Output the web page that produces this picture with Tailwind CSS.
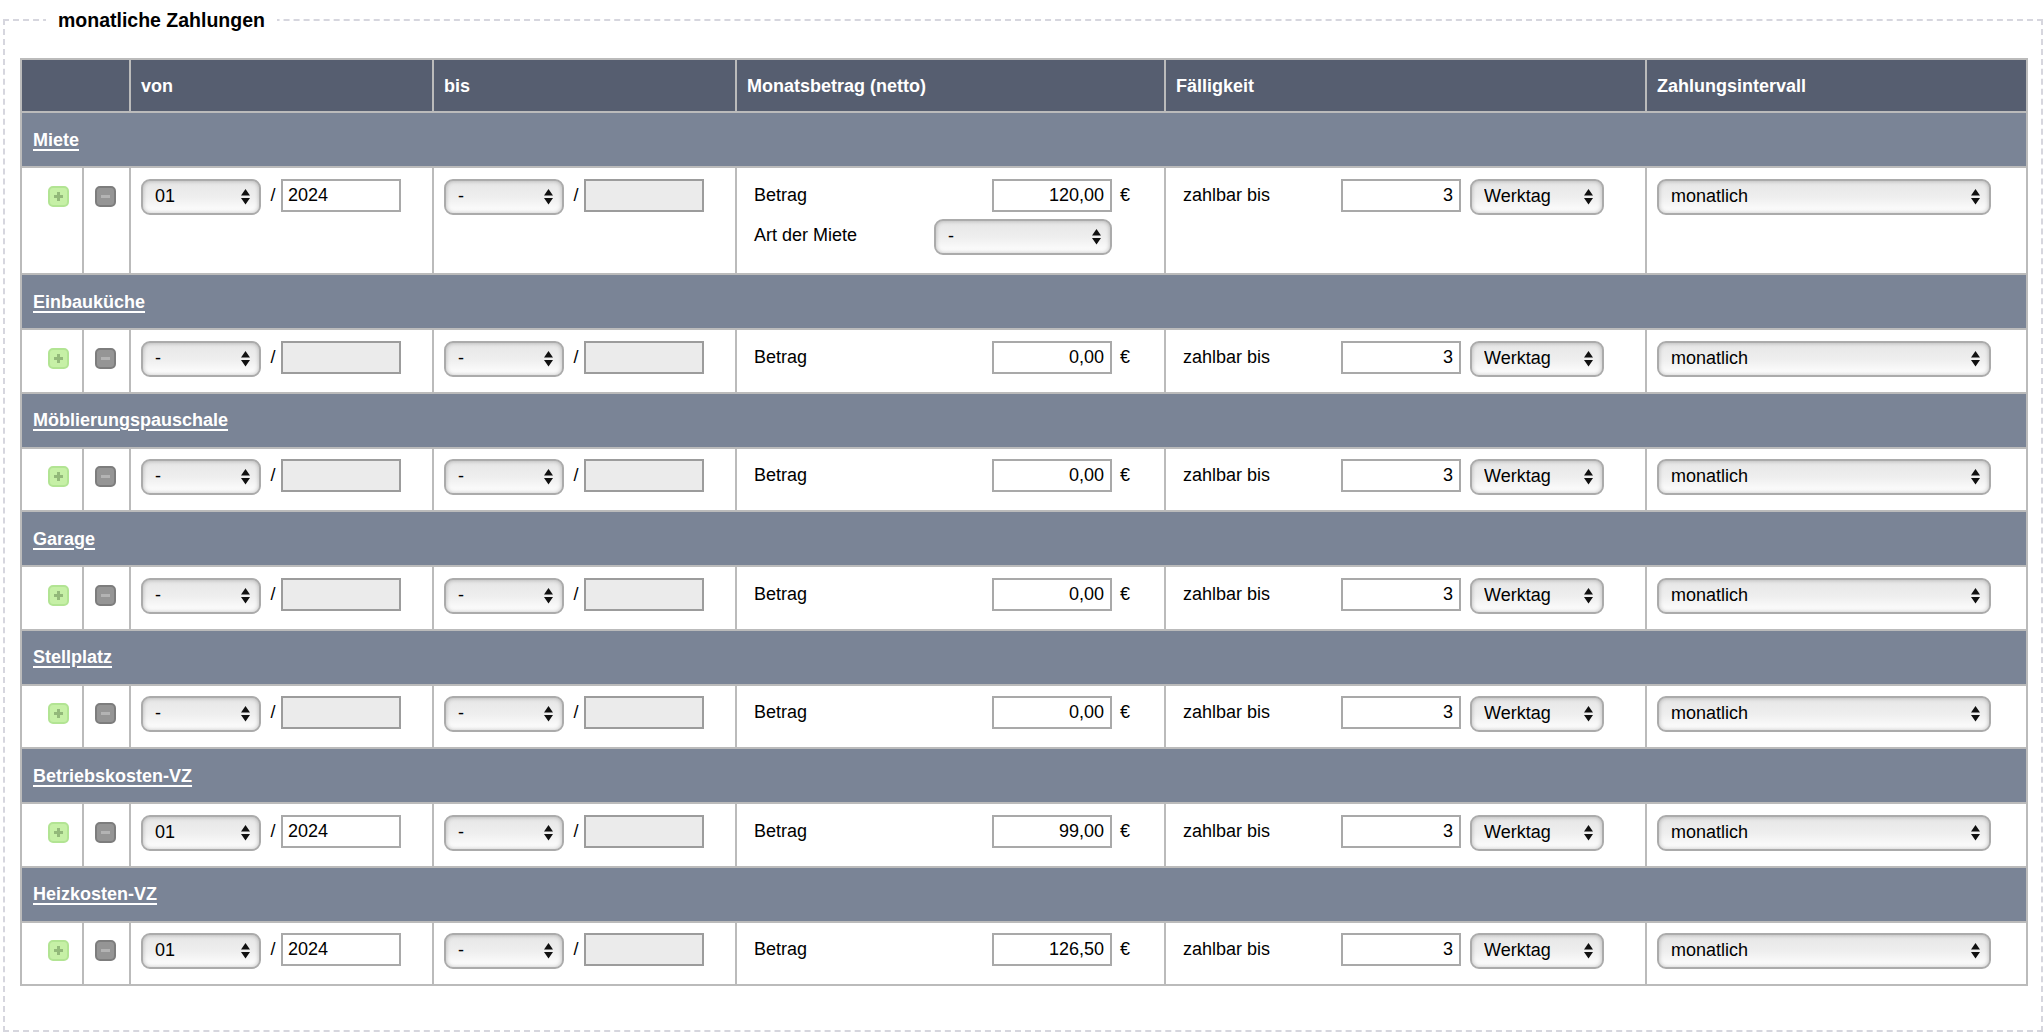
<!DOCTYPE html>
<html lang="de">
<head>
  <meta charset="UTF-8" />
  <title>monatliche Zahlungen</title>
  <script src="https://cdn.jsdelivr.net/npm/@tailwindcss/browser@4"></script>
</head>
<body class="bg-white text-black text-[18px] leading-[22px] font-['Liberation_Sans',Arial,sans-serif] overflow-hidden">
  <fieldset class="mt-[8px] mx-[3px] w-[2040px] h-[1024px] border-2 border-dashed border-[#d6d6de] pt-[26px] pl-[15px]">
    <legend class="ml-[26px] px-[12px] text-[19.5px] leading-[24px] font-bold">monatliche Zahlungen</legend>

    <table class="table-fixed border-collapse w-[2007px] border-2 border-[#bbbbbb]">
      <colgroup>
        <col class="w-[62px]" /><col class="w-[47px]" /><col class="w-[303px]" /><col class="w-[303px]" /><col class="w-[429px]" /><col class="w-[481px]" /><col class="w-[381px]" />
      </colgroup>
      <thead>
        <tr class="h-[53px] bg-[#565e70] text-white font-bold text-left">
          <th colspan="2" class="border-2 border-[#bbbbbb]"></th>
          <th class="border-2 border-[#bbbbbb] pl-[10px]">von</th>
          <th class="border-2 border-[#bbbbbb] pl-[10px]">bis</th>
          <th class="border-2 border-[#bbbbbb] pl-[10px]">Monatsbetrag (netto)</th>
          <th class="border-2 border-[#bbbbbb] pl-[10px]">Fälligkeit</th>
          <th class="border-2 border-[#bbbbbb] pl-[10px]">Zahlungsintervall</th>
        </tr>
      </thead>
      <tbody id="rows"></tbody>
    </table>
  </fieldset>

  <script>
    // one entry per payment type: name, von month/year, amount
    const payments = [
      { name: "Miete", month: "01", year: "2024", amount: "120,00", artDerMiete: true },
      { name: "Einbauküche", month: "-", year: "", amount: "0,00" },
      { name: "Möblierungspauschale", month: "-", year: "", amount: "0,00" },
      { name: "Garage", month: "-", year: "", amount: "0,00" },
      { name: "Stellplatz", month: "-", year: "", amount: "0,00" },
      { name: "Betriebskosten-VZ", month: "01", year: "2024", amount: "99,00" },
      { name: "Heizkosten-VZ", month: "01", year: "2024", amount: "126,50" },
    ];

    const dropdown = (label, width) => `
      <div class="relative h-[36px] shrink-0 ${width}">
        <select class="appearance-none w-full h-full pl-[12px] pb-[2px] rounded-[9px] border-2 border-[#ababab] bg-linear-to-b from-[#e6e6e6] via-[#eeeeee] to-white shadow-[inset_0_0_4px_rgba(0,0,0,0.25)]"><option>${label}</option></select>
        <svg class="absolute right-[11px] top-[10px]" width="9" height="16" viewBox="0 0 9 16"><path d="M4.500 0L9 6.500H0zM0 9h9L4.500 15.500z" fill="#111"/></svg>
      </div>`;

    const yearInput = (year) => year
      ? `<input type="text" value="${year}" class="w-[120px] h-[33px] border-2 border-[#a9a9a9] pl-[5px]" />`
      : `<input type="text" disabled class="w-[120px] h-[33px] border-2 border-[#9c9c9c] bg-[#ebebeb] pl-[5px]" />`;

    const period = (month, year) => `
      <div class="flex items-start">
        ${dropdown(month, "w-[120px]")}
        <span class="w-[20px] pl-[4px] text-center leading-[32px]">/</span>
        ${yearInput(year)}
      </div>`;

    const row = (p) => `
      <tr class="h-[55px] bg-[#7a8496]">
        <td colspan="7" class="border-2 border-[#bbbbbb] pl-[11px]"><a href="#" class="font-bold text-white underline decoration-2 underline-offset-[3px]">${p.name}</a></td>
      </tr>
      <tr class="${p.artDerMiete ? "h-[107px]" : "h-[63.5px]"} align-top">
        <td class="border-2 border-[#bbbbbb] pl-[26px] pt-[17.5px]">
          <svg class="block" width="21" height="21" viewBox="0 0 21 21"><rect x="1" y="1" width="19" height="19" rx="4" fill="#c6f0a6" stroke="#b2e493" stroke-width="2"/><path d="M10.500 6v9M6 10.500h9" stroke="#93b97a" stroke-width="3"/></svg>
        </td>
        <td class="border-2 border-[#bbbbbb] pl-[11px] pt-[17.5px]">
          <svg class="block" width="21" height="21" viewBox="0 0 21 21"><rect x="1" y="1" width="19" height="19" rx="4" fill="#959595" stroke="#7d7d7d" stroke-width="2"/><path d="M6 10.500h9" stroke="#b3b3b3" stroke-width="3"/></svg>
        </td>
        <td class="border-2 border-[#bbbbbb] pl-[10px] pt-[10.5px]">${period(p.month, p.year)}</td>
        <td class="border-2 border-[#bbbbbb] pl-[10px] pt-[10.5px]">${period("-", "")}</td>
        <td class="border-2 border-[#bbbbbb] pl-[17px] pt-[10.5px]">
          <div class="flex items-start">
            <div class="w-[358px] flex justify-between items-start">
              <span class="leading-[32px]">Betrag</span>
              <input type="text" value="${p.amount}" class="w-[120px] h-[33px] border-2 border-[#a9a9a9] pr-[6px] text-right" />
            </div>
            <span class="ml-[8px] leading-[32px]">€</span>
          </div>
          ${p.artDerMiete ? `
          <div class="w-[358px] flex justify-between items-start mt-[7px]">
            <span class="leading-[32px]">Art der Miete</span>
            ${dropdown("-", "w-[178px]")}
          </div>` : ""}
        </td>
        <td class="border-2 border-[#bbbbbb] pl-[17px] pt-[10.5px]">
          <div class="flex items-start">
            <span class="w-[158px] leading-[32px]">zahlbar bis</span>
            <input type="text" value="3" class="w-[120px] h-[33px] border-2 border-[#a9a9a9] pr-[6px] text-right" />
            <div class="ml-[9px]">${dropdown("Werktag", "w-[134px]")}</div>
          </div>
        </td>
        <td class="border-2 border-[#bbbbbb] pl-[10px] pt-[10.5px]">${dropdown("monatlich", "w-[334px]")}</td>
      </tr>`;

    document.getElementById("rows").innerHTML = payments.map(row).join("");
  </script>
</body>
</html>
